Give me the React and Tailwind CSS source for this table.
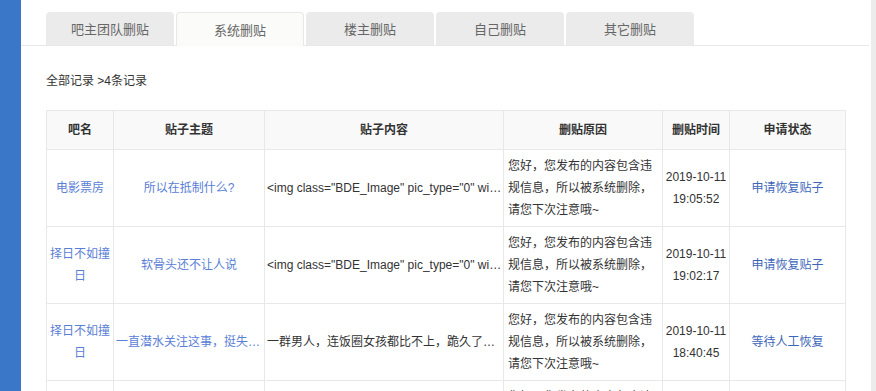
import React from 'react';

const tabs = ['吧主团队删贴', '系统删贴', '楼主删贴', '自己删贴', '其它删贴'];

const reason = '您好，您发布的内容包含违规信息，所以被系统删除，请您下次注意哦~';

const rows = [
  {
    bar: '电影票房',
    title: '所以在抵制什么?',
    content: '<img class="BDE_Image" pic_type="0" width="560" height="315" src="https://imgsa.baidu.com/forum/pic/item/a.jpg">',
    date: '2019-10-11',
    time: '19:05:52',
    state: '申请恢复贴子',
  },
  {
    bar: '择日不如撞日',
    title: '软骨头还不让人说',
    content: '<img class="BDE_Image" pic_type="0" width="560" height="315" src="https://imgsa.baidu.com/forum/pic/item/b.jpg">',
    date: '2019-10-11',
    time: '19:02:17',
    state: '申请恢复贴子',
  },
  {
    bar: '择日不如撞日',
    title: '一直潜水关注这事，挺失望的',
    content: '一群男人，连饭圈女孩都比不上，跪久了站不起来了',
    date: '2019-10-11',
    time: '18:40:45',
    state: '等待人工恢复',
  },
  {
    bar: '择日不如撞日',
    title: '一直潜水关注这事',
    content: '一群男人',
    date: '2019-10-11',
    time: '18:30:12',
    state: '等待人工恢复',
  },
];

const App = () => {
  return (
    <div
      className="flex h-[391px] w-[876px] overflow-hidden bg-white text-[#333]"
      style={{ fontFamily: '"Liberation Sans", "Noto Sans CJK SC", sans-serif' }}
    >
      {/* Left blue bar */}
      <div className="w-[21px] shrink-0 bg-[#3b77c8]" />

      {/* Main */}
      <div className="w-[850px] shrink-0 pt-[12px]">
        {/* Tabs */}
        <div className="mr-[2px] flex gap-[2px] border-b border-[#e8e8e8] pl-[25px]">
          {tabs.map((t, i) => (
            <div
              key={t}
              className={`-mb-px flex h-[34px] w-[128px] items-center justify-center rounded-t-[4px] pt-[2px] text-[13px] text-[#666] ${
                i === 1
                  ? 'border border-b-0 border-[#e8e8e8] bg-[#fbfbf9]'
                  : 'border-b border-[#e8e8e8] bg-[#ebebeb]'
              }`}
            >
              {t}
            </div>
          ))}
        </div>

        {/* Summary */}
        <p className="pl-[25px] pt-[27px] text-[12px] leading-[16px] text-[#333]">全部记录 &gt;4条记录</p>

        {/* Table */}
        <table className="ml-[25px] mt-[21px] w-[799px] table-fixed border-collapse text-[12px]">
          <colgroup>
            <col className="w-[67px]" />
            <col className="w-[151px]" />
            <col className="w-[239px]" />
            <col className="w-[159px]" />
            <col className="w-[67px]" />
            <col className="w-[116px]" />
          </colgroup>
          <thead>
            <tr className="h-[39px] bg-[#f9f9f9]">
              {['吧名', '贴子主题', '贴子内容', '删贴原因', '删贴时间', '申请状态'].map((h) => (
                <th key={h} className="border border-[#e8e8e8] text-center font-bold text-[#333]">
                  {h}
                </th>
              ))}
            </tr>
          </thead>
          <tbody>
            {rows.map((r, i) => (
              <tr key={i} className="h-[77px] leading-[22px]">
                <td className="border border-[#e8e8e8] px-[3px] text-center align-middle text-[#5a80d6]">
                  {r.bar}
                </td>
                <td className="overflow-hidden text-ellipsis whitespace-nowrap border border-[#e8e8e8] px-[2px] text-center align-middle text-[#5a80d6]">
                  {r.title}
                </td>
                <td className="overflow-hidden text-ellipsis whitespace-nowrap border border-[#e8e8e8] pl-[2px] pr-0 text-left align-middle text-[#333]">
                  {r.content}
                </td>
                <td className="border border-[#e8e8e8] px-[4px] py-[5px] text-left align-middle text-[#333]">
                  {reason}
                </td>
                <td className="border border-[#e8e8e8] px-[2px] text-center align-middle text-[#333]">
                  <div>{r.date}</div>
                  <div>{r.time}</div>
                </td>
                <td className="border border-[#e8e8e8] text-center align-middle text-[12px] text-[#3d66bb]">
                  {r.state}
                </td>
              </tr>
            ))}
          </tbody>
        </table>
      </div>

      {/* Right scroll strip */}
      <div className="w-[5px] shrink-0 bg-[#ececec]" />
    </div>
  );
};

export default App;
